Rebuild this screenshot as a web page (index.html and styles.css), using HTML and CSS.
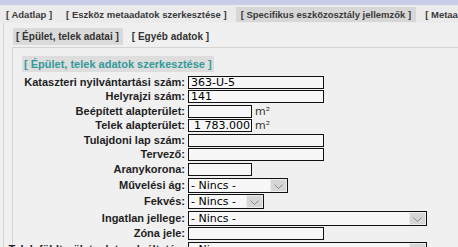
FILE: index.html
```html
<!DOCTYPE html>
<html lang="hu">
<head>
    <meta charset="UTF-8">
    <meta name="viewport" content="width=device-width, initial-scale=1.0">
    <title>Specifikus eszközosztály jellemzők</title>
    <link rel="stylesheet" href="styles.css">
</head>
<body>
    <div class="top-strip"></div>
    <ul class="tabs">
        <li><a href="#">[ Adatlap ]</a></li>
        <li><a href="#">[ Eszköz metaadatok szerkesztése ]</a></li>
        <li class="active"><a href="#">[ Specifikus eszközosztály jellemzők ]</a></li>
        <li><a href="#">[ Metaadatok ]</a></li>
    </ul>
    <div class="panel">
        <ul class="subtabs">
            <li class="active"><a href="#">[ Épület, telek adatai ]</a></li>
            <li><a href="#">[ Egyéb adatok ]</a></li>
        </ul>
        <div class="box">
            <h2 class="box-title">[ Épület, telek adatok szerkesztése ]</h2>
            <form class="form">
                <label class="label">Kataszteri nyilvántartási szám:</label>
                <div class="cell"><input type="text" class="field w-wide" value="363-U-5"></div>

                <label class="label">Helyrajzi szám:</label>
                <div class="cell"><input type="text" class="field w-wide" value="141"></div>

                <label class="label">Beépített alapterület:</label>
                <div class="cell"><input type="text" class="field w-short" value=""><span class="unit">m²</span></div>

                <label class="label">Telek alapterület:</label>
                <div class="cell"><input type="text" class="field w-short num" value="1 783.000"><span class="unit">m²</span></div>

                <label class="label">Tulajdoni lap szám:</label>
                <div class="cell"><input type="text" class="field w-wide" value=""></div>

                <label class="label">Tervező:</label>
                <div class="cell"><input type="text" class="field w-wide" value=""></div>

                <label class="label">Aranykorona:</label>
                <div class="cell"><input type="text" class="field w-short" value=""></div>

                <label class="label">Művelési ág:</label>
                <div class="cell">
                    <div class="select w-100"><span class="value">- Nincs -</span><span class="arrow"><svg width="9" height="5" viewBox="0 0 9 5"><polyline points="0.5,0.5 4.5,4.5 8.5,0.5"/></svg></span></div>
                </div>

                <label class="label">Fekvés:</label>
                <div class="cell">
                    <div class="select w-76"><span class="value">- Nincs -</span><span class="arrow"><svg width="9" height="5" viewBox="0 0 9 5"><polyline points="0.5,0.5 4.5,4.5 8.5,0.5"/></svg></span></div>
                </div>

                <label class="label">Ingatlan jellege:</label>
                <div class="cell">
                    <div class="select w-239"><span class="value">- Nincs -</span><span class="arrow"><svg width="9" height="5" viewBox="0 0 9 5"><polyline points="0.5,0.5 4.5,4.5 8.5,0.5"/></svg></span></div>
                </div>

                <label class="label">Zóna jele:</label>
                <div class="cell"><input type="text" class="field w-wide" value=""></div>

                <label class="label">Telek földterület adatszolgáltatás:</label>
                <div class="cell">
                    <div class="select w-239"><span class="value">- Nincs -</span><span class="arrow"><svg width="9" height="5" viewBox="0 0 9 5"><polyline points="0.5,0.5 4.5,4.5 8.5,0.5"/></svg></span></div>
                </div>
            </form>
        </div>
    </div>
</body>
</html>
```

FILE: styles.css
```css
* {
    margin: 0;
    padding: 0;
    box-sizing: border-box;
}

html, body {
    height: 100%;
}

body {
    background-color: #f0f0f0;
    font-family: "Liberation Sans", Arial, sans-serif;
    overflow: hidden;
    display: flex;
    flex-direction: column;
}

a {
    color: inherit;
    text-decoration: none;
}

.top-strip {
    flex-shrink: 0;
    height: 5px;
    background-color: #c7cce9;
}

/* Main tabs */
.tabs {
    flex-shrink: 0;
    list-style: none;
    display: flex;
    gap: 4px;
    padding: 2px 0 1px 1px;
    background-color: #ebebeb;
    white-space: nowrap;
    overflow: hidden;
}

.tabs li {
    flex-shrink: 0;
    padding: 0 5px;
    height: 15px;
    line-height: 15px;
    font-size: 9.5px;
    font-weight: bold;
    color: #3a3a3a;
}

.tabs li.active {
    background-color: #d7d7d7;
}

/* Panel */
.panel {
    flex: 1 0 auto;
    margin-left: 3px;
    border-left: 1px solid #d4d4d4;
    display: flex;
    flex-direction: column;
}

.subtabs {
    list-style: none;
    display: flex;
    gap: 6px;
    padding: 5px 0 0 9px;
}

.subtabs li {
    padding: 0 4px 0 3px;
    height: 17px;
    line-height: 17px;
    font-size: 10px;
    font-weight: bold;
    color: #333;
}

.subtabs li.active {
    background-color: #dadada;
}

.box {
    flex: 1 0 auto;
    margin: 2px 0 0 8px;
    border-top: 1px solid #d4d4d4;
    border-left: 1px solid #d4d4d4;
    padding: 8px 0 0 9px;
}

.box-title {
    width: fit-content;
    padding: 0 2px;
    background-color: #dddddd;
    color: #339a9c;
    font-size: 11px;
    font-weight: bold;
    line-height: 16px;
}

/* Form grid */
.form {
    display: grid;
    grid-template-columns: 163px auto;
    justify-content: start;
    align-items: center;
    column-gap: 3px;
    row-gap: 1.6px;
    margin-top: 3.5px;
}

.label {
    display: flex;
    justify-content: flex-end;
    white-space: nowrap;
    font-size: 11px;
    font-weight: bold;
    line-height: 13px;
    color: #1e1e1e;
}

.cell {
    display: flex;
    align-items: center;
}

.field {
    height: 13px;
    border: 1px solid #111;
    background-color: #f7f7f7;
    font-family: "DejaVu Sans", Verdana, sans-serif;
    font-size: 11px;
    color: #000;
    padding: 0 2px;
    outline: none;
}

.field.num {
    text-align: right;
    padding-right: 1px;
}

.w-wide { width: 136px; }
.w-short { width: 64px; }
.w-100 { width: 100px; }
.w-76 { width: 76px; }
.w-239 { width: 239px; }

.unit {
    margin-left: 3px;
    font-family: "DejaVu Sans", Verdana, sans-serif;
    font-size: 11px;
    line-height: 13px;
    color: #333;
}

.select {
    display: flex;
    height: 15px;
    border: 1px solid #111;
    background-color: #f7f7f7;
}

.select .value {
    flex: 1;
    padding-left: 2px;
    font-family: "DejaVu Sans", Verdana, sans-serif;
    font-size: 11px;
    line-height: 13px;
    color: #000;
    white-space: nowrap;
    overflow: hidden;
}

.select .arrow {
    width: 17px;
    background-color: #d6d6d6;
    border: 1px solid #ececec;
    display: flex;
    justify-content: center;
    align-items: flex-end;
    padding-bottom: 2px;
}

.select .arrow svg polyline {
    fill: none;
    stroke: #8a8a8a;
    stroke-width: 1;
}
```
